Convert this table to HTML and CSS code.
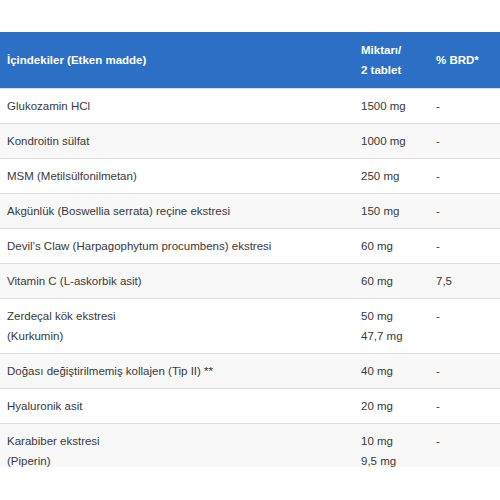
FILE: index.html
```html
<!DOCTYPE html>
<html lang="tr">
<head>
<meta charset="utf-8">
<link rel="stylesheet" href="styles.css">
</head>
<body>
<div class="frame">
<table class="facts">
<colgroup><col class="c1"><col class="c2"><col class="c3"></colgroup>
<thead>
<tr><th>İçindekiler (Etken madde)</th><th>Miktarı/<br>2 tablet</th><th>% BRD*</th></tr>
</thead>
<tbody>
<tr><td>Glukozamin HCl</td><td>1500 mg</td><td>-</td></tr>
<tr><td>Kondroitin sülfat</td><td>1000 mg</td><td>-</td></tr>
<tr><td>MSM (Metilsülfonilmetan)</td><td>250 mg</td><td>-</td></tr>
<tr><td>Akgünlük (Boswellia serrata) reçine ekstresi</td><td>150 mg</td><td>-</td></tr>
<tr><td>Devil’s Claw (Harpagophytum procumbens) ekstresi</td><td>60 mg</td><td>-</td></tr>
<tr><td>Vitamin C (L-askorbik asit)</td><td>60 mg</td><td>7,5</td></tr>
<tr><td>Zerdeçal kök ekstresi<br>(Kurkumin)</td><td>50 mg<br>47,7 mg</td><td>-</td></tr>
<tr><td>Doğası değiştirilmemiş kollajen (Tip II) **</td><td>40 mg</td><td>-</td></tr>
<tr><td>Hyaluronik asit</td><td>20 mg</td><td>-</td></tr>
<tr><td>Karabiber ekstresi<br>(Piperin)</td><td>10 mg<br>9,5 mg</td><td>-</td></tr>
</tbody>
</table>
</div>
</body>
</html>
```
FILE: styles.css
```css
html, body {
  margin: 0;
  padding: 0;
  background: #ffffff;
}
body {
  padding-top: 32px;
  font-family: "Liberation Sans", Arial, sans-serif;
  font-size: 11.5px;
  color: #383838;
}
.frame {
  height: 435px;
  overflow: hidden;
}
.facts {
  width: 500px;
  border-collapse: separate;
  border-spacing: 0;
  table-layout: fixed;
}
.c1 { width: 354px; }
.c2 { width: 75px; }
.c3 { width: 71px; }
.facts th {
  background: #2d6fc5;
  color: #ffffff;
  font-weight: bold;
  text-align: left;
  vertical-align: middle;
  padding: 8px 7px;
  line-height: 20px;
}
.facts td {
  text-align: left;
  vertical-align: top;
  padding: 7px 7px;
  line-height: 20px;
  border-top: 1px solid #dddddd;
}
.facts tbody tr:nth-child(even) td {
  background: #f8f8f8;
}
```
